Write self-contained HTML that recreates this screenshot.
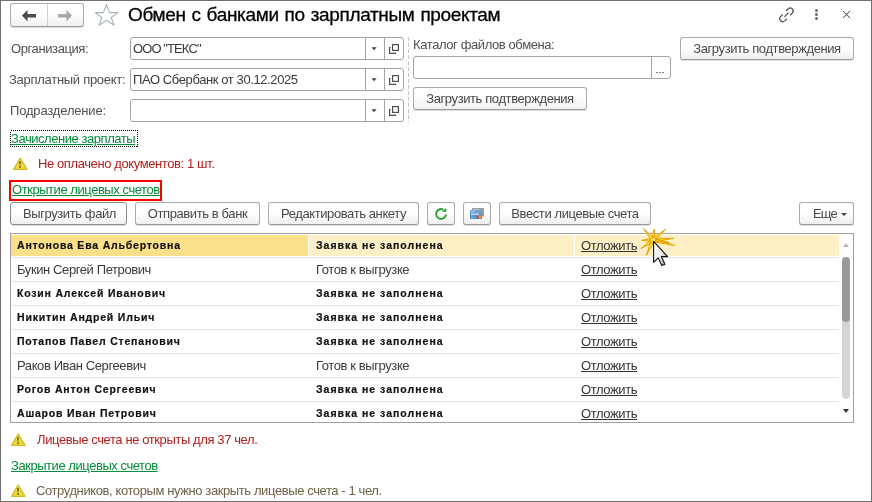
<!DOCTYPE html>
<html><head><meta charset="utf-8">
<style>
*{margin:0;padding:0;box-sizing:border-box}
html,body{width:872px;height:502px;overflow:hidden;background:#fff}
body{position:relative;font-family:"Liberation Sans",sans-serif;font-size:13px;line-height:15px;color:#404040;letter-spacing:-0.4px}
.a{position:absolute;white-space:nowrap;will-change:transform}
#frame{position:absolute;left:0;top:0;width:872px;height:502px;border:1px solid #707070;z-index:50}
.title{left:128px;top:4px;font-size:19px;line-height:22px;color:#000;letter-spacing:-0.35px;word-spacing:1px;-webkit-text-stroke:0.3px #000}
.lbl{left:10px;color:#505050}
.fld{position:absolute;border:1px solid #a3a3a3;border-radius:3px;background:#fff;height:23px}
.vs{position:absolute;top:0;width:1px;height:21px;background:#a3a3a3}
.btn{position:absolute;will-change:transform;border:1px solid #ababab;border-bottom-color:#9a9a9a;border-radius:3px;background:linear-gradient(#fff 0,#fff 40%,#f0f0f0 100%);box-shadow:0 1px 0 rgba(0,0,0,.13);height:23px;color:#484848;text-align:center;line-height:15px;padding-top:3px}
.lnk{color:#038a3a;letter-spacing:-0.45px;text-decoration:underline;text-underline-offset:1px}
.warn{color:#b3201f}
.row{position:absolute;left:11px;width:828px;height:1px;background:#e4e4e4}
.b{font-weight:bold;font-size:10.5px;line-height:13px;color:#111;letter-spacing:0.8px;-webkit-text-stroke:0.2px #111}
.r{color:#3a3a3a}
.b2{letter-spacing:1.0px}
.u{color:#333;text-decoration:underline;text-underline-offset:1px}
</style></head><body>
<div id="frame"></div>

<!-- nav buttons -->
<div class="btn" style="left:10px;top:3px;width:74px;height:24px"></div>
<div class="a" style="left:47px;top:4px;width:1px;height:22px;background:#d0d0d0"></div>
<svg class="a" style="left:22px;top:10px" width="14" height="12" viewBox="0 0 14 12"><path d="M0 5.5 L5.5 0 L5.5 4 L14 4 L14 7.5 L5.5 7.5 L5.5 11.5 Z" fill="#4a4a4a"/></svg>
<svg class="a" style="left:58px;top:10px" width="14" height="12" viewBox="0 0 14 12"><path d="M14 5.5 L8.5 0 L8.5 4 L0 4 L0 7.5 L8.5 7.5 L8.5 11.5 Z" fill="#a8a8a8"/></svg>
<!-- star -->
<svg class="a" style="left:90px;top:0px" width="32" height="30" viewBox="0 0 32 30"><path d="M16.5 4.6 L19.6 12.6 L27.8 12.6 L21.2 17.5 L24 25.3 L16.5 20.2 L9 25.3 L11.8 17.5 L5.2 12.6 L13.4 12.6 Z" fill="none" stroke="#aab2ba" stroke-width="1.1" stroke-linejoin="round"/></svg>
<div class="a title">Обмен с банками по зарплатным проектам</div>

<!-- right icons -->
<svg class="a" style="left:778px;top:6px" width="18" height="18" viewBox="0 0 18 18"><g fill="none" stroke="#555" stroke-width="1.4" stroke-linecap="butt" transform="translate(8.6 8.7) scale(0.9) translate(-8.5 -8.5)"><path d="M7.9 4.4 L10.27 1.97 A3.3 3.3 0 0 1 14.93 6.63 L12.5 9.05"/><path d="M4.17 8.27 L1.77 10.67 A3.3 3.3 0 0 0 6.43 15.33 L8.83 12.93"/><path d="M6.1 10.9 L10.6 6.4"/></g></svg>
<div class="a" style="left:815px;top:9px;width:3px;height:3px;border-radius:2px;background:#6a6a6a"></div>
<div class="a" style="left:815px;top:13px;width:3px;height:3px;border-radius:2px;background:#6a6a6a"></div>
<div class="a" style="left:815px;top:17px;width:3px;height:3px;border-radius:2px;background:#6a6a6a"></div>
<svg class="a" style="left:842px;top:10px" width="10" height="10" viewBox="0 0 10 10"><path d="M1 1 L8 8 M8 1 L1 8" stroke="#555" stroke-width="1.05"/></svg>

<!-- labels & fields -->
<div class="a lbl" style="left:11px;top:41px">Организация:</div>
<div class="a lbl" style="left:9px;top:72px;letter-spacing:-0.28px">Зарплатный проект:</div>
<div class="a lbl" style="top:103px;letter-spacing:-0.17px">Подразделение:</div>

<div class="fld" style="left:130px;top:37px;width:274px"><span class="a r" style="left:2px;top:3px;letter-spacing:-0.9px">ООО "ТЕКС"</span><div class="vs" style="left:234px"></div><div class="vs" style="left:253px"></div></div>
<div class="fld" style="left:130px;top:68px;width:274px"><span class="a r" style="left:2px;top:3px">ПАО Сбербанк от 30.12.2025</span><div class="vs" style="left:234px"></div><div class="vs" style="left:253px"></div></div>
<div class="fld" style="left:130px;top:99px;width:274px"><div class="vs" style="left:234px"></div><div class="vs" style="left:253px"></div></div>
<!-- field icons -->
<svg class="a" style="left:371px;top:47px" width="7" height="4" viewBox="0 0 7 4"><path d="M0.5 0.2 L5.6 0.2 L3.05 3.3 Z" fill="#404040"/></svg>
<svg class="a" style="left:371px;top:78px" width="7" height="4" viewBox="0 0 7 4"><path d="M0.5 0.2 L5.6 0.2 L3.05 3.3 Z" fill="#404040"/></svg>
<svg class="a" style="left:371px;top:109px" width="7" height="4" viewBox="0 0 7 4"><path d="M0.5 0.2 L5.6 0.2 L3.05 3.3 Z" fill="#404040"/></svg>
<svg class="a" style="left:388px;top:43px" width="12" height="12" viewBox="0 0 12 12"><g fill="none" stroke="#505050" stroke-width="1.2"><rect x="4.6" y="1.6" width="5.8" height="5.8"/><path d="M2.6 4.5 L1.6 4.5 L1.6 10.4 L7.4 10.4 L7.4 9.4"/></g></svg>
<svg class="a" style="left:388px;top:74px" width="12" height="12" viewBox="0 0 12 12"><g fill="none" stroke="#505050" stroke-width="1.2"><rect x="4.6" y="1.6" width="5.8" height="5.8"/><path d="M2.6 4.5 L1.6 4.5 L1.6 10.4 L7.4 10.4 L7.4 9.4"/></g></svg>
<svg class="a" style="left:388px;top:105px" width="12" height="12" viewBox="0 0 12 12"><g fill="none" stroke="#505050" stroke-width="1.2"><rect x="4.6" y="1.6" width="5.8" height="5.8"/><path d="M2.6 4.5 L1.6 4.5 L1.6 10.4 L7.4 10.4 L7.4 9.4"/></g></svg>

<!-- dashed sep -->
<div class="a" style="left:408px;top:37px;width:1px;height:85px;background:repeating-linear-gradient(#c8c8c8 0,#c8c8c8 4px,transparent 4px,transparent 6px)"></div>

<div class="a lbl" style="left:413px;top:37px">Каталог файлов обмена:</div>
<div class="fld" style="left:413px;top:56px;width:258px;height:23px"><div class="vs" style="left:237px"></div>
<div class="a" style="left:242px;top:15px;width:2px;height:1px;background:#7a7a7a"></div>
<div class="a" style="left:245px;top:15px;width:2px;height:1px;background:#8a8a8a"></div>
<div class="a" style="left:248px;top:15px;width:2px;height:1px;background:#7a7a7a"></div></div>
<div class="btn" style="left:413px;top:87px;width:174px">Загрузить подтверждения</div>
<div class="btn" style="left:680px;top:37px;width:174px">Загрузить подтверждения</div>

<!-- links -->
<svg class="a" style="left:10px;top:130px" width="128" height="17" viewBox="0 0 128 17" shape-rendering="crispEdges"><rect x="0.5" y="0.5" width="127" height="16" fill="none" stroke="#000" stroke-width="1" stroke-dasharray="1 1"/></svg>
<div class="a lnk" style="left:11px;top:131px">Зачисление зарплаты</div>
<svg class="a" style="left:13px;top:157px" width="16" height="14" viewBox="0 0 16 14"><path d="M7.2 1 L14 12.3 L0.6 12.3 Z" fill="#f0da3c" stroke="#d2bb22" stroke-width="1.3" stroke-linejoin="round"/><path d="M6.1 4.2 L7.9 4.2 L7.4 8.6 L6.6 8.6 Z" fill="#5a5224"/><rect x="6.2" y="9.3" width="1.6" height="1.5" fill="#5a5224"/></svg>
<div class="a warn" style="left:38px;top:156px">Не оплачено документов: 1 шт.</div>
<div class="a" style="left:9px;top:180px;width:153px;height:21px;border:2px solid #ff0000"></div>
<div class="a lnk" style="left:12px;top:182px">Открытие лицевых счетов</div>

<!-- toolbar -->
<div class="btn" style="left:10px;top:202px;width:117px;border-color:#8a8a8a;padding-left:2px">Выгрузить файл</div>
<div class="btn" style="left:135px;top:202px;width:125px">Отправить в банк</div>
<div class="btn" style="left:268px;top:202px;width:151px">Редактировать анкету</div>
<div class="btn" style="left:427px;top:202px;width:28px"></div>
<svg class="a" style="left:433px;top:207px" width="16" height="16" viewBox="0 0 16 16"><path d="M12.9 7.5 A4.9 4.9 0 1 1 10.2 2.6" fill="none" stroke="#22a029" stroke-width="1.9"/><path d="M13.2 0.9 L13.2 5 L8.9 4.4 Z" fill="#22a029"/></svg>
<div class="btn" style="left:463px;top:202px;width:28px"></div>
<svg class="a" style="left:469px;top:207px" width="18" height="14" viewBox="0 0 18 14"><defs><linearGradient id="cb" x1="0" y1="0" x2="0" y2="1"><stop offset="0" stop-color="#74a7d6"/><stop offset="1" stop-color="#4f89c0"/></linearGradient></defs><rect x="3" y="1" width="12" height="8.5" fill="#9c9c9c"/><rect x="4" y="2" width="6" height="1" fill="#c4c4c4"/><rect x="1" y="3" width="12" height="9" fill="url(#cb)"/><rect x="2" y="6.6" width="8" height="1.1" fill="#e4eef7"/><rect x="2" y="4.2" width="3.5" height="0.9" fill="#b9d2ea"/><rect x="2" y="10" width="3.5" height="0.7" fill="#9dbfe0"/><circle cx="9.4" cy="9.9" r="1.35" fill="#e42c2c"/><circle cx="10.9" cy="9.9" r="1.35" fill="#f3a61d"/></svg>
<div class="btn" style="left:499px;top:202px;width:152px">Ввести лицевые счета</div>
<div class="btn" style="left:799px;top:202px;width:55px;text-align:left;padding-left:13px;letter-spacing:-0.9px">Еще</div>
<svg class="a" style="left:841px;top:213px" width="7" height="4" viewBox="0 0 7 4"><path d="M0 0 L6 0 L3 3 Z" fill="#404040"/></svg>

<!-- table -->
<div class="a" style="left:10px;top:233px;width:844px;height:190px;border:1px solid #a0a0a0"></div>
<div class="a" style="left:11px;top:235px;width:297px;height:21px;background:#fbe08a"></div>
<div class="a" style="left:309px;top:235px;width:265px;height:21px;background:#fdf0c7"></div>
<div class="a" style="left:575px;top:235px;width:264px;height:21px;background:#fdf0c7"></div>
<div class="row" style="top:257px"></div>
<div class="row" style="top:281px"></div>
<div class="row" style="top:305px"></div>
<div class="row" style="top:329px"></div>
<div class="row" style="top:353px"></div>
<div class="row" style="top:377px"></div>
<div class="row" style="top:401px"></div>

<div class="a b" style="left:17px;top:239px">Антонова Ева Альбертовна</div>
<div class="a b b2" style="left:316px;top:239px">Заявка не заполнена</div>
<div class="a u" style="left:581px;top:238px">Отложить</div>

<div class="a r" style="left:17px;top:262px">Букин Сергей Петрович</div>
<div class="a r" style="left:316px;top:262px">Готов к выгрузке</div>
<div class="a u" style="left:581px;top:262px">Отложить</div>

<div class="a b" style="left:17px;top:287px">Козин Алексей Иванович</div>
<div class="a b b2" style="left:316px;top:287px">Заявка не заполнена</div>
<div class="a u" style="left:581px;top:286px">Отложить</div>

<div class="a b" style="left:17px;top:311px">Никитин Андрей Ильич</div>
<div class="a b b2" style="left:316px;top:311px">Заявка не заполнена</div>
<div class="a u" style="left:581px;top:310px">Отложить</div>

<div class="a b" style="left:17px;top:335px">Потапов Павел Степанович</div>
<div class="a b b2" style="left:316px;top:335px">Заявка не заполнена</div>
<div class="a u" style="left:581px;top:334px">Отложить</div>

<div class="a r" style="left:17px;top:358px">Раков Иван Сергеевич</div>
<div class="a r" style="left:316px;top:358px">Готов к выгрузке</div>
<div class="a u" style="left:581px;top:358px">Отложить</div>

<div class="a b" style="left:17px;top:383px">Рогов Антон Сергеевич</div>
<div class="a b b2" style="left:316px;top:383px">Заявка не заполнена</div>
<div class="a u" style="left:581px;top:382px">Отложить</div>

<div class="a b" style="left:17px;top:407px">Ашаров Иван Петрович</div>
<div class="a b b2" style="left:316px;top:407px">Заявка не заполнена</div>
<div class="a u" style="left:581px;top:406px">Отложить</div>

<!-- scrollbar -->
<svg class="a" style="left:842px;top:242px" width="8" height="6" viewBox="0 0 8 6"><path d="M1 5 L7 5 L4 1 Z" fill="#b4b4b4"/></svg>
<div class="a" style="left:842px;top:257px;width:8px;height:142px;border-radius:4px;background:#d5d5d5"></div>
<div class="a" style="left:842px;top:257px;width:8px;height:65px;border-radius:4px;background:#9a9a9a"></div>
<svg class="a" style="left:842px;top:408px" width="8" height="6" viewBox="0 0 8 6"><path d="M1 1 L7 1 L4 5 Z" fill="#333"/></svg>

<!-- cursor + burst -->
<svg class="a" style="left:636px;top:224px;z-index:10" width="44" height="46" viewBox="0 0 44 46">
<path d="M18.5 14.8 L7.3 4.2 L15.9 17.0 Z M18.9 16.1 L18.3 4.9 L15.5 15.7 Z M18.3 17.2 L29.7 5.3 L16.1 14.6 Z M17.1 14.2 L5.8 16.3 L17.3 17.6 Z M17.3 17.6 L37.6 14.4 L17.1 14.2 Z M16.8 17.5 L38.7 21.6 L17.6 14.3 Z M16.2 14.5 L5.0 24.6 L18.2 17.3 Z M15.6 15.2 L10.3 31.4 L18.8 16.6 Z M16.9 17.6 L33.0 18.5 L17.5 14.2 Z" fill="#ffe03a" stroke="#e6a200" stroke-width="1" stroke-linejoin="miter"/>
<circle cx="17.2" cy="15.9" r="2.2" fill="#ffe466"/>
<defs><linearGradient id="cg" x1="0" y1="0" x2="1" y2="1"><stop offset="0" stop-color="#ffffff"/><stop offset="0.5" stop-color="#f2f2f2"/><stop offset="1" stop-color="#8c8c8c"/></linearGradient></defs>
<path d="M17.6 17.3 L17.6 38.3 L22.2 33.9 L25.8 41.6 L28.9 40.2 L25.4 32.6 L31.6 32.6 Z" fill="url(#cg)" stroke="#111" stroke-width="1.1" stroke-linejoin="round"/>
</svg>

<!-- bottom -->
<svg class="a" style="left:11px;top:433px" width="16" height="14" viewBox="0 0 16 14"><path d="M7.2 1 L14 12.3 L0.6 12.3 Z" fill="#f0da3c" stroke="#d2bb22" stroke-width="1.3" stroke-linejoin="round"/><path d="M6.1 4.2 L7.9 4.2 L7.4 8.6 L6.6 8.6 Z" fill="#5a5224"/><rect x="6.2" y="9.3" width="1.6" height="1.5" fill="#5a5224"/></svg>
<div class="a warn" style="left:37px;top:432px">Лицевые счета не открыты для 37 чел.</div>
<div class="a lnk" style="left:11px;top:458px">Закрытие лицевых счетов</div>
<svg class="a" style="left:11px;top:484px" width="16" height="14" viewBox="0 0 16 14"><path d="M7.2 1 L14 12.3 L0.6 12.3 Z" fill="#f0da3c" stroke="#d2bb22" stroke-width="1.3" stroke-linejoin="round"/><path d="M6.1 4.2 L7.9 4.2 L7.4 8.6 L6.6 8.6 Z" fill="#5a5224"/><rect x="6.2" y="9.3" width="1.6" height="1.5" fill="#5a5224"/></svg>
<div class="a" style="left:36px;top:483px;color:#6e6248">Сотрудников, которым нужно закрыть лицевые счета - 1 чел.</div>
</body></html>
